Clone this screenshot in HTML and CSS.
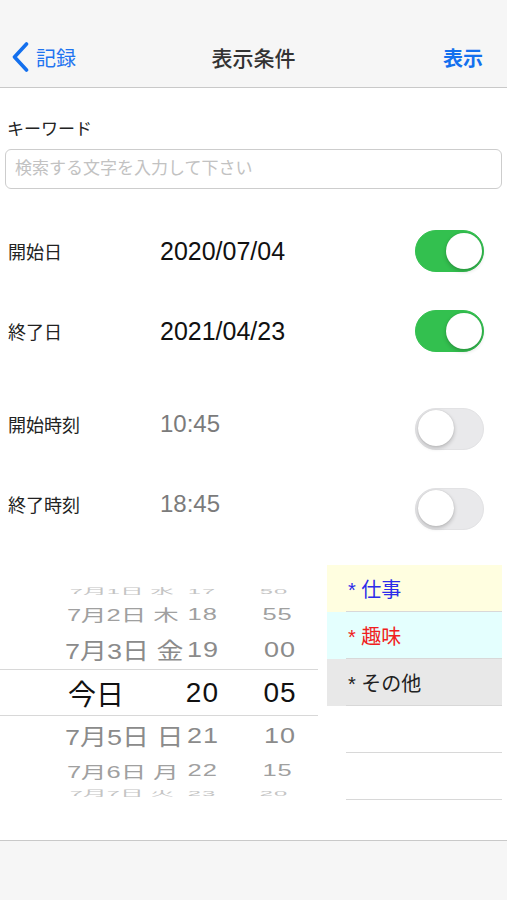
FILE: index.html
```html
<!DOCTYPE html>
<html lang="ja">
<head>
    <meta charset="UTF-8">
    <meta name="viewport" content="width=device-width, initial-scale=1.0">
    <title>表示条件</title>
    <link rel="stylesheet" href="styles.css">
</head>
<body>
    <div class="screen">
        <header class="navbar">
            <a class="nav-back">
                <svg class="chevron" width="17" height="30" viewBox="0 0 17 30">
                    <polyline points="14.5,2 2.5,15 14.5,28" fill="none" stroke="#1470ee" stroke-width="3.6" stroke-linecap="round" stroke-linejoin="round"/>
                </svg>
                <span>記録</span>
            </a>
            <h1 class="nav-title">表示条件</h1>
            <a class="nav-action">表示</a>
        </header>

        <main class="content">
            <div class="keyword">
                <label class="keyword-label" for="keyword">キーワード</label>
                <input class="keyword-input" id="keyword" type="text" placeholder="検索する文字を入力して下さい">
            </div>

            <div class="cond-group">
                <div class="cond-row">
                    <span class="cond-label">開始日</span>
                    <span class="cond-value">2020/07/04</span>
                    <span class="switch on"></span>
                </div>
                <div class="cond-row">
                    <span class="cond-label">終了日</span>
                    <span class="cond-value">2021/04/23</span>
                    <span class="switch on"></span>
                </div>
            </div>

            <div class="cond-group time">
                <div class="cond-row">
                    <span class="cond-label">開始時刻</span>
                    <span class="cond-value">10:45</span>
                    <span class="switch"></span>
                </div>
                <div class="cond-row">
                    <span class="cond-label">終了時刻</span>
                    <span class="cond-value">18:45</span>
                    <span class="switch"></span>
                </div>
            </div>

            <div class="bottom-area">
                <div class="picker">
                    <div class="wheel-row far"><span class="day">7月1日 水</span><span class="hour">17</span><span class="min">50</span></div>
                    <div class="wheel-row mid"><span class="day">7月2日 木</span><span class="hour">18</span><span class="min">55</span></div>
                    <div class="wheel-row near"><span class="day">7月3日 金</span><span class="hour">19</span><span class="min">00</span></div>
                    <div class="wheel-row selected"><span class="day">今日</span><span class="hour">20</span><span class="min">05</span></div>
                    <div class="wheel-row near"><span class="day">7月5日 日</span><span class="hour">21</span><span class="min">10</span></div>
                    <div class="wheel-row mid"><span class="day">7月6日 月</span><span class="hour">22</span><span class="min">15</span></div>
                    <div class="wheel-row far"><span class="day">7月7日 火</span><span class="hour">23</span><span class="min">20</span></div>
                </div>

                <ul class="category-list">
                    <li class="cat work"><span class="cat-text">* 仕事</span></li>
                    <li class="cat hobby"><span class="cat-text">* 趣味</span></li>
                    <li class="cat other"><span class="cat-text">* その他</span></li>
                    <li class="cat"><span class="cat-text"></span></li>
                    <li class="cat"><span class="cat-text"></span></li>
                </ul>
            </div>
        </main>

        <footer class="toolbar"></footer>
    </div>
</body>
</html>
```

FILE: styles.css
```css
body {
    margin: 0;
    background-color: #ffffff;
    color: #111111;
    font-family: "Liberation Sans", "Noto Sans CJK JP", sans-serif;
}
.screen {
    display: flex;
    flex-direction: column;
    height: 100vh;
}

/* navigation bar */
.navbar {
    display: grid;
    grid-template-columns: 1fr auto 1fr;
    align-items: center;
    height: 60px;
    padding-top: 27px;
    background-color: #f6f6f6;
    border-bottom: 1px solid #c9c9c9;
}
.nav-back {
    display: flex;
    align-items: center;
    gap: 7px;
    padding-left: 12px;
    color: #1f74f0;
    font-size: 20px;
}
.chevron {
    display: block;
}
.nav-title {
    margin: 0;
    font-size: 21px;
    font-weight: 500;
    color: #333333;
}
.nav-action {
    justify-self: end;
    padding-right: 24px;
    font-size: 20px;
    font-weight: 600;
    color: #1470ee;
}

.content {
    flex: 1;
}

/* keyword */
.keyword {
    padding-top: 30px;
}
.keyword-label {
    display: block;
    padding-left: 7px;
    margin-bottom: 7px;
    font-size: 17px;
    line-height: 24px;
    color: #222222;
}
.keyword-input {
    display: block;
    box-sizing: border-box;
    width: calc(100% - 10px);
    height: 40px;
    margin: 0 5px;
    padding: 0 9px;
    border: 1px solid #cdcdcd;
    border-radius: 6px;
    font-family: "Liberation Sans", "Noto Sans CJK JP", sans-serif;
    font-size: 17px;
    color: #111111;
}
.keyword-input::placeholder {
    color: #c2c2c2;
}

/* date / time conditions */
.cond-group {
    margin-top: 22px;
}
.cond-group + .cond-group {
    margin-top: 15px;
}
.cond-row {
    display: flex;
    align-items: center;
    height: 80px;
    padding: 0 23px 0 8px;
}
.cond-label {
    width: 152px;
    font-size: 18px;
    color: #222222;
}
.cond-value {
    font-size: 25px;
    color: #111111;
}
.time .cond-row {
    box-sizing: border-box;
    padding-bottom: 5px;
}
.time .cond-value {
    font-size: 24px;
    color: #7b7b7b;
}
.switch {
    position: relative;
    box-sizing: border-box;
    width: 69px;
    height: 42px;
    margin-left: auto;
    border-radius: 21px;
    background-color: #e9e9eb;
    border: 1.5px solid #e2e2e4;
}
.switch::after {
    content: "";
    position: absolute;
    top: 1.5px;
    left: 1.5px;
    width: 36px;
    height: 36px;
    border-radius: 50%;
    background-color: #ffffff;
    box-shadow: 0 2px 4px rgba(0, 0, 0, 0.22), 0 0 1px rgba(0, 0, 0, 0.2);
}
.switch.on {
    background-color: #33c04f;
    border-color: #33c04f;
}
.switch.on::after {
    left: auto;
    right: 1.5px;
}
.time .switch {
    margin-top: 10px;
}

/* picker + category list */
.bottom-area {
    display: flex;
    margin-top: 19px;
}
.picker {
    width: 318px;
    padding-top: 19px;
}
.wheel-row {
    display: flex;
    align-items: center;
    padding-left: 65px;
    white-space: nowrap;
    transform-origin: 160px 50%;
}
.wheel-row .day {
    width: 118px;
}
.wheel-row .hour {
    width: 36px;
    text-align: right;
    letter-spacing: 1px;
}
.wheel-row .min {
    width: 60px;
    margin-left: 31px;
    text-align: center;
    letter-spacing: 1px;
}
.wheel-row.far {
    height: 14px;
    font-size: 25px;
    color: #c4c4c4;
    transform: scale(0.95, 0.3);
}
.wheel-row.mid {
    height: 32px;
    font-size: 26px;
    color: #a0a0a0;
    transform: scale(0.98, 0.62);
}
.wheel-row.near {
    height: 39px;
    font-size: 27px;
    color: #8b8b8b;
    transform: scaleY(0.83);
}
.wheel-row.selected {
    box-sizing: border-box;
    height: 47px;
    border-top: 1px solid #d8d8d8;
    border-bottom: 1px solid #d8d8d8;
    font-size: 28px;
    color: #111111;
}
.wheel-row.selected .day {
    padding-left: 3px;
    box-sizing: border-box;
}
.wheel-row.near + .wheel-row.mid {
    height: 31px;
}

.category-list {
    flex: 1;
    list-style: none;
    margin: 0 5px 0 9px;
    padding: 0;
}
.cat {
    height: 47px;
}
.cat-text {
    display: flex;
    align-items: center;
    box-sizing: border-box;
    height: 100%;
    margin-left: 19px;
    padding-left: 2px;
    border-bottom: 1px solid #d8d8d8;
    font-size: 20px;
}
.work {
    background-color: #fffee0;
    color: #2b2bea;
}
.hobby {
    background-color: #e4fffe;
    color: #f02020;
}
.other {
    background-color: #e8e8e8;
    color: #222222;
}

/* bottom toolbar */
.toolbar {
    height: 59px;
    background-color: #f6f6f6;
    border-top: 1px solid #c9c9c9;
}
```
